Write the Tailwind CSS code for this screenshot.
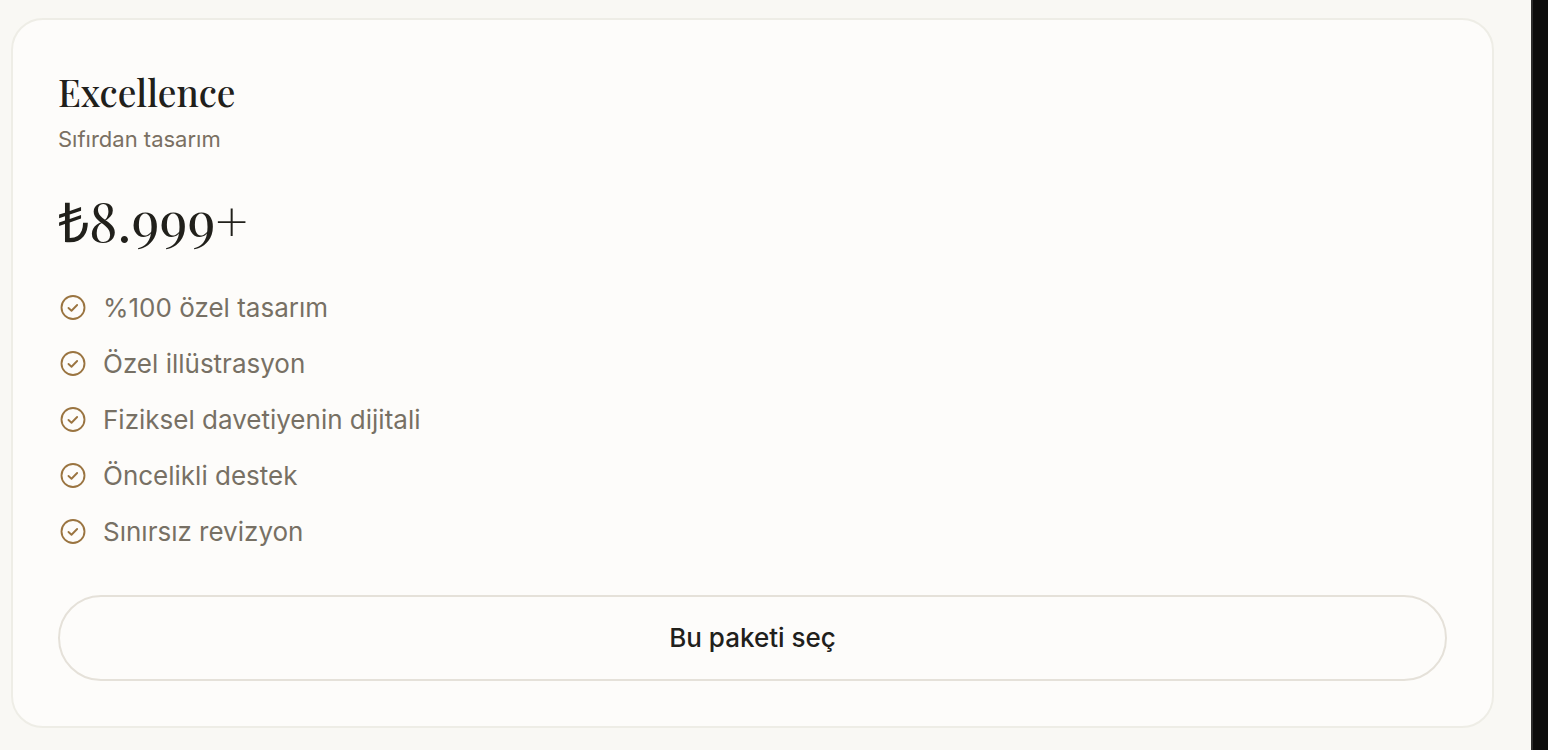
<!DOCTYPE html>
<html lang="tr">
<head>
    <meta charset="UTF-8">
    <meta name="viewport" content="width=device-width, initial-scale=1.0">
    <title>Excellence</title>
    <script src="https://cdn.jsdelivr.net/npm/@tailwindcss/browser@4"></script>
</head>
<body class="flex min-h-screen bg-[#0c0c0c] font-['Inter','Liberation_Sans',sans-serif] text-[#21201b]">
    <main class="flex-1 border-r-2 border-[#2c2c2c] bg-[#f9f8f4] pt-[18px] pr-[37px] pb-[22px] pl-[11px]">
        <!-- Package card -->
        <section class="rounded-[32px] border-2 border-[#eeede6] bg-[#fdfcfa] p-[45px]">
            <h2 class="font-['Playfair_Display','Liberation_Serif',serif] text-[37px] leading-[54px] font-medium">Excellence</h2>
            <p class="mt-1 text-[22px] leading-8 text-[#7a7062]">Sıfırdan tasarım</p>
            <p class="mt-8 font-['Playfair_Display','Liberation_Serif',serif] text-[55px] leading-[64px]">₺8.999+</p>

            <!-- Features -->
            <ul class="mt-[37px] space-y-4 text-[26px] leading-10 text-[#777064]">
                <li class="flex items-center gap-[15px]">
                    <svg class="size-[30px] shrink-0 text-[#9a7440]" viewBox="0 0 24 24" fill="none" stroke="currentColor" stroke-width="1.5" stroke-linecap="round" stroke-linejoin="round"><circle cx="12" cy="11.6" r="9.2" /><path d="m8.4 12 2.4 2.2 4.5-4.6" /></svg>
                    %100 özel tasarım
                </li>
                <li class="flex items-center gap-[15px]">
                    <svg class="size-[30px] shrink-0 text-[#9a7440]" viewBox="0 0 24 24" fill="none" stroke="currentColor" stroke-width="1.5" stroke-linecap="round" stroke-linejoin="round"><circle cx="12" cy="11.6" r="9.2" /><path d="m8.4 12 2.4 2.2 4.5-4.6" /></svg>
                    Özel illüstrasyon
                </li>
                <li class="flex items-center gap-[15px]">
                    <svg class="size-[30px] shrink-0 text-[#9a7440]" viewBox="0 0 24 24" fill="none" stroke="currentColor" stroke-width="1.5" stroke-linecap="round" stroke-linejoin="round"><circle cx="12" cy="11.6" r="9.2" /><path d="m8.4 12 2.4 2.2 4.5-4.6" /></svg>
                    Fiziksel davetiyenin dijitali
                </li>
                <li class="flex items-center gap-[15px]">
                    <svg class="size-[30px] shrink-0 text-[#9a7440]" viewBox="0 0 24 24" fill="none" stroke="currentColor" stroke-width="1.5" stroke-linecap="round" stroke-linejoin="round"><circle cx="12" cy="11.6" r="9.2" /><path d="m8.4 12 2.4 2.2 4.5-4.6" /></svg>
                    Öncelikli destek
                </li>
                <li class="flex items-center gap-[15px]">
                    <svg class="size-[30px] shrink-0 text-[#9a7440]" viewBox="0 0 24 24" fill="none" stroke="currentColor" stroke-width="1.5" stroke-linecap="round" stroke-linejoin="round"><circle cx="12" cy="11.6" r="9.2" /><path d="m8.4 12 2.4 2.2 4.5-4.6" /></svg>
                    Sınırsız revizyon
                </li>
            </ul>

            <button type="button" class="mt-[43px] w-full cursor-pointer rounded-full border-2 border-[#e5e1d9] py-[21px] text-[26px] leading-10 font-medium hover:bg-[#f9f8f4]">Bu paketi seç</button>
        </section>
    </main>
    <aside class="w-[15px]"></aside>
</body>
</html>
